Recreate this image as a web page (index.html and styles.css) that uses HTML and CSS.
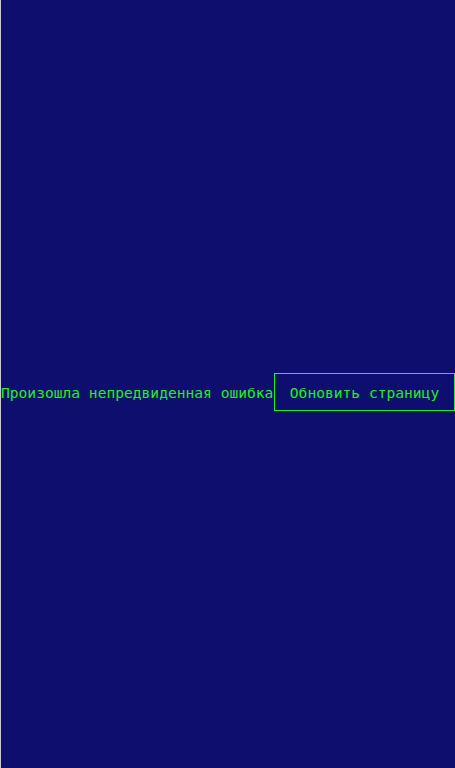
FILE: index.html
```html
<!DOCTYPE html>
<html lang="ru">
<head>
<meta charset="utf-8">
<link rel="stylesheet" href="styles.css">
</head>
<body>
<div class="page">
  <div class="error">
    <span class="message">Произошла непредвиденная ошибка</span>
    <button class="reload">Обновить страницу</button>
  </div>
</div>
</body>
</html>
```
FILE: styles.css
```css
html, body {
  margin: 0;
  padding: 0;
  height: 100%;
}
body {
  background: #0e0e6e;
  border-left: 1px solid #c8c8d8;
  box-sizing: border-box;
}
.page {
  height: 100%;
  padding-top: 16px;
  box-sizing: border-box;
  display: flex;
  align-items: center;
}
.error {
  display: flex;
  align-items: center;
  font-family: "DejaVu Sans Mono", monospace;
  font-size: 14.6px;
  color: #22ee22;
}
.message {
  white-space: nowrap;
  width: 273px;
  flex: none;
}
.reload {
  font: inherit;
  color: #22ee22;
  background: transparent;
  border: 1px solid #22ee22;
  padding: 0;
  width: 181px;
  height: 38px;
  margin: 0;
  text-align: center;
  white-space: nowrap;
  cursor: pointer;
}
```
